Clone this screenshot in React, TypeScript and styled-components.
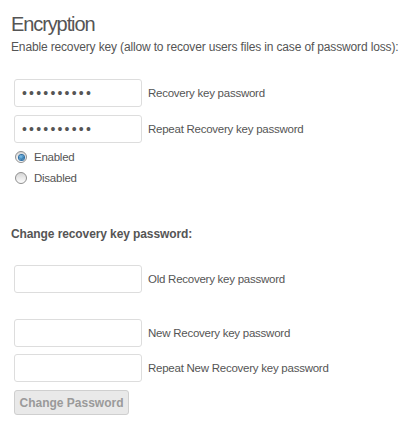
import React from 'react';
import styled, { createGlobalStyle } from 'styled-components';

const Global = createGlobalStyle`
  html, body {
    margin: 0;
    padding: 0;
    background: #fff;
  }
  body {
    font-family: "Liberation Sans", Arial, sans-serif;
    color: #555;
  }
`

const Page = styled.div`
  width: 403px;
  height: 430px;
  padding: 12px 0 0 11px;
  box-sizing: border-box;
  display: flex;
  flex-direction: column;
`

const Title = styled.h2`
  margin: 0;
  font-size: 20px;
  line-height: 24px;
  font-weight: normal;
  letter-spacing: -1.1px;
  color: #555;
`

const Desc = styled.div`
  margin-top: 3px;
  font-size: 12px;
  line-height: 16px;
  letter-spacing: -0.15px;
  white-space: nowrap;
`

const Sub = styled.div<{ $top: number }>`
  margin-top: ${p => p.$top}px;
  font-size: 12px;
  line-height: 16px;
  font-weight: bold;
  letter-spacing: -0.1px;
`

const Field = styled.div<{ $top: number }>`
  margin-top: ${p => p.$top}px;
  margin-left: 3px;
  display: flex;
  align-items: center;
  gap: 6px;
  height: 28px;
`

const Input = styled.input`
  width: 128px;
  height: 28px;
  box-sizing: border-box;
  border: 1px solid #ddd;
  border-radius: 3px;
  background: #fff;
  padding: 0 7px;
  font-family: "Liberation Sans", Arial, sans-serif;
  font-size: 14px;
  color: #555;
  outline: none;
  letter-spacing: 2.2px;
`

const Label = styled.span`
  font-size: 11.5px;
  letter-spacing: -0.25px;
  color: #555;
`

const RadioRow = styled.label<{ $top: number }>`
  margin-top: ${p => p.$top}px;
  margin-left: 4px;
  height: 20px;
  display: flex;
  align-items: center;
  gap: 7px;
  font-size: 11.5px;
  letter-spacing: -0.25px;
`

const Dot = styled.span<{ $on?: boolean }>`
  width: 12px;
  height: 12px;
  box-sizing: border-box;
  border-radius: 50%;
  border: 1px solid #8f8f8f;
  background: linear-gradient(#d6d6d6, #fdfdfd);
  display: flex;
  align-items: center;
  justify-content: center;
  &::after {
    content: '';
    display: ${p => (p.$on ? 'block' : 'none')};
    width: 5px;
    height: 5px;
    border-radius: 50%;
    background: radial-gradient(circle at 40% 35%, #7fc4f0, #0a4f86);
    box-shadow: 0 0 0 1px #2c6fa6;
  }
`

const Button = styled.button<{ $top: number }>`
  margin-top: ${p => p.$top}px;
  margin-left: 3px;
  width: 115px;
  height: 25px;
  box-sizing: border-box;
  border: 1px solid #cfcfcf;
  border-radius: 3px;
  background: #e9e9e9;
  color: #9a9a9a;
  font-family: "Liberation Sans", Arial, sans-serif;
  font-size: 12px;
  font-weight: bold;
  padding: 0;
`

export default function App() {
  return (
    <Page>
      <Global />
      <Title>Encryption</Title>
      <Desc>Enable recovery key (allow to recover users files in case of password loss):</Desc>
      <Field $top={24}>
        <Input type="password" defaultValue="1234567890" readOnly />
        <Label>Recovery key password</Label>
      </Field>
      <Field $top={8}>
        <Input type="password" defaultValue="1234567890" readOnly />
        <Label>Repeat Recovery key password</Label>
      </Field>
      <RadioRow $top={4}>
        <Dot $on />
        Enabled
      </RadioRow>
      <RadioRow $top={1}>
        <Dot />
        Disabled
      </RadioRow>
      <Sub $top={38}>Change recovery key password:</Sub>
      <Field $top={23}>
        <Input type="password" readOnly />
        <Label>Old Recovery key password</Label>
      </Field>
      <Field $top={26}>
        <Input type="password" readOnly />
        <Label>New Recovery key password</Label>
      </Field>
      <Field $top={7}>
        <Input type="password" readOnly />
        <Label>Repeat New Recovery key password</Label>
      </Field>
      <Button $top={8} disabled>Change Password</Button>
    </Page>
  );
}
